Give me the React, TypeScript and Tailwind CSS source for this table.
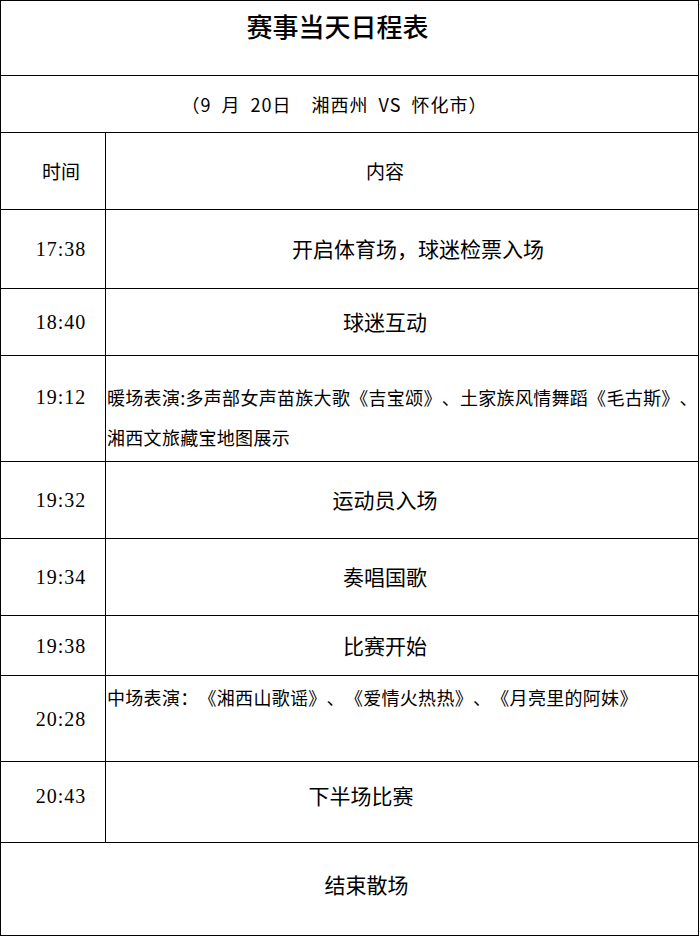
// Match-day schedule sheet: a bordered two-column table with a title,
// a fixture line, and one row per timed item.

import React from 'react'

const SANS = 'font-["Noto_Sans_CJK_SC","Noto_Sans",sans-serif]'
const TIME = 'font-["Liberation_Serif","Noto_Sans_CJK_SC",serif]'

type Row = {
  time: string
  h: string
  content: React.ReactNode
  cell: string
  timeCell?: string
}

const rows: Row[] = [
  { time: '17:38', h: 'h-[79px]', content: '开启体育场，球迷检票入场', cell: 'items-center justify-center pl-[32px] text-[21px]' },
  { time: '18:40', h: 'h-[67px]', content: '球迷互动', cell: 'items-center justify-center pr-[34px] text-[21px]' },
  {
    time: '19:12',
    h: 'h-[106px]',
    content: (
      <span className="whitespace-nowrap tracking-[0.3px]">
        暖场表演:多声部女声苗族大歌《吉宝颂》、土家族风情舞蹈《毛古斯》、
        <br />
        湘西文旅藏宝地图展示
      </span>
    ),
    cell: 'items-start justify-start pt-[21px] pl-[1px] text-[18px] leading-[40px]',
    timeCell: 'items-start pt-[21px] leading-[40px]',
  },
  { time: '19:32', h: 'h-[77px]', content: '运动员入场', cell: 'items-center justify-center pr-[34px] text-[21px]' },
  { time: '19:34', h: 'h-[77px]', content: '奏唱国歌', cell: 'items-center justify-center pr-[34px] text-[21px]' },
  { time: '19:38', h: 'h-[60px]', content: '比赛开始', cell: 'items-center justify-center pr-[34px] text-[21px]' },
  {
    time: '20:28',
    h: 'h-[86px]',
    content: <span className="whitespace-nowrap tracking-[0.3px]">中场表演：《湘西山歌谣》、《爱情火热热》、《月亮里的阿妹》</span>,
    cell: 'items-start justify-start pt-[7px] pl-[1px] text-[18px] leading-[28px]',
  },
  { time: '20:43', h: 'h-[81px]', content: '下半场比赛', cell: 'items-center justify-center pr-[82px] pb-[12px] text-[21px]', timeCell: 'items-center pb-[12px]' },
]

export default function App() {
  return (
    <div className="min-h-[936px] bg-white text-black [text-spacing-trim:space-all]">
      <div className="w-[699px] border border-black">
        {/* title */}
        <div className="h-[75px] border-b border-black pr-[24px] pt-[8px] text-center">
          <h1 className={`${SANS} text-[26px] font-medium leading-[34px]`}>赛事当天日程表</h1>
        </div>

        {/* fixture line */}
        <div className={`${SANS} flex h-[57px] items-center justify-center border-b border-black pr-[30px] text-[18px]`}>
          <span className="whitespace-pre tracking-[1px] [word-spacing:5px]">（9 月 20日  湘西州 VS 怀化市）</span>
        </div>

        {/* header */}
        <div className={`${SANS} flex h-[77px] border-b border-black text-[19px]`}>
          <div className="flex w-[105px] shrink-0 items-center justify-center border-r border-black pl-[16px]">时间</div>
          <div className="flex flex-1 items-center justify-center pr-[34px]">内容</div>
        </div>

        {rows.map((r) => (
          <div key={r.time} className={`flex ${r.h} border-b border-black`}>
            <div
              className={`${TIME} flex w-[105px] shrink-0 justify-center border-r border-black pl-[16px] text-[20px] tracking-[1px] ${r.timeCell ?? 'items-center'}`}
            >
              {r.time}
            </div>
            <div className={`${SANS} flex flex-1 ${r.cell}`}>{r.content}</div>
          </div>
        ))}

        {/* closing */}
        <div className={`${SANS} flex h-[92px] items-center justify-center pb-[8px] pl-[34px] text-[21px]`}>结束散场</div>
      </div>
    </div>
  )
}
